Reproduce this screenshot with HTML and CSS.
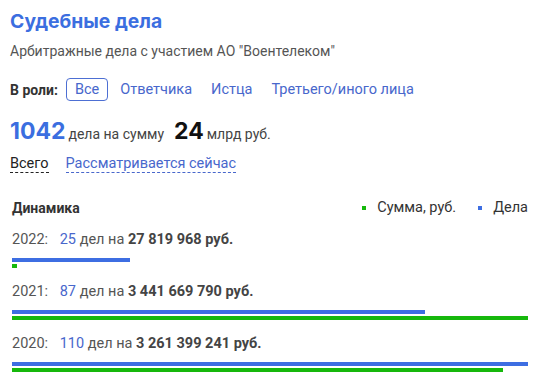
FILE: index.html
```html
<!DOCTYPE html>
<html>
<head>
    <title>Судебные дела</title>
    <link rel="stylesheet" href="styles.css">
</head>
<body>
    <div id="cases">
        <h2 class="title">Судебные дела</h2>
        <div class="subtitle">Арбитражные дела с участием АО "Воентелеком"</div>

        <div class="roles">
            <span class="roles-label">В роли:</span>
            <a class="role active">Все</a>
            <a class="role">Ответчика</a>
            <a class="role">Истца</a>
            <a class="role">Третьего/иного лица</a>
        </div>

        <div class="totals">
            <span class="count">1042</span>
            <span class="unit">дела на сумму</span>
            <span class="sum">24</span>
            <span class="unit">млрд руб.</span>
        </div>

        <div class="tabs">
            <a class="tab current">Всего</a>
            <a class="tab">Рассматривается сейчас</a>
        </div>

        <div class="chart">
            <div class="chart-head">
                <span class="chart-title">Динамика</span>
                <span class="legend"><i class="dot green"></i>Сумма, руб.</span>
                <span class="legend"><i class="dot blue"></i>Дела</span>
            </div>

            <div class="year">
                <div class="year-text">2022: <span class="num">25</span> дел на <b>27 819 968 руб.</b></div>
                <div class="bar blue" style="width: 22.8%"></div>
                <div class="bar green" style="width: 1%"></div>
            </div>
            <div class="year">
                <div class="year-text">2021: <span class="num">87</span> дел на <b>3 441 669 790 руб.</b></div>
                <div class="bar blue" style="width: 80%"></div>
                <div class="bar green" style="width: 100%"></div>
            </div>
            <div class="year">
                <div class="year-text">2020: <span class="num">110</span> дел на <b>3 261 399 241 руб.</b></div>
                <div class="bar blue" style="width: 100%"></div>
                <div class="bar green" style="width: 95.2%"></div>
            </div>
        </div>
    </div>
</body>
</html>
```

FILE: styles.css
```css
body {
    margin: 0;
    font-family: Roboto, "Noto Sans", sans-serif;
    background-color: #fff;
    color: #333;
}
#cases {
    padding: 8px 15px 0 10px;
}
.title {
    margin: 0;
    font-family: Inter, sans-serif;
    font-size: 19.3px;
    font-weight: 700;
    color: #3b6ee0;
    line-height: 26px;
}
.subtitle {
    margin-top: 8px;
    font-size: 14px;
    color: #555;
    line-height: 18px;
}
.roles {
    display: flex;
    align-items: center;
    margin-top: 18px;
    font-size: 14.5px;
}
.roles-label {
    font-weight: 700;
    font-size: 14px;
    color: #333;
    margin-right: 8px;
}
.role {
    color: #4867cc;
    margin-right: 19px;
    line-height: 21px;
}
.role.active {
    border: 1px solid #4d6fd3;
    border-radius: 4px;
    padding: 0 8px;
    margin-right: 12px;
}
.totals {
    display: flex;
    align-items: baseline;
    margin-top: 16px;
}
.count {
    font-family: Inter, sans-serif;
    font-size: 23px;
    font-weight: 700;
    color: #3b6ee0;
    margin-right: 3px;
}
.sum {
    font-family: Inter, sans-serif;
    font-size: 23px;
    font-weight: 700;
    color: #111;
    margin: 0 3px 0 10px;
}
.unit {
    font-size: 14px;
    color: #444;
}
.tabs {
    display: flex;
    margin-top: 10px;
    font-size: 14.5px;
}
.tab {
    color: #4867cc;
    border-bottom: 1px dashed #4867cc;
    margin-right: 17px;
    line-height: 17px;
}
.tab.current {
    color: #222;
    border-bottom-color: #222;
}
.chart {
    margin-top: 26px;
    padding-left: 2px;
}
.chart-head {
    display: flex;
    align-items: center;
    font-size: 14px;
}
.chart-title {
    font-weight: 700;
    color: #333;
    flex: 1;
}
.legend {
    display: flex;
    align-items: center;
    font-size: 14.5px;
    color: #333;
    margin-left: 22px;
}
.dot {
    width: 4px;
    height: 4px;
    margin-right: 11px;
}
.dot.green,
.bar.green {
    background-color: #16b80c;
}
.dot.blue,
.bar.blue {
    background-color: #3d6ee2;
}
.year {
    margin-top: 15px;
}
.year-text {
    font-size: 14.5px;
    color: #555;
    margin-bottom: 9px;
    line-height: 18px;
}
.year-text .num {
    color: #4867cc;
    margin-left: 8px;
}
.year-text b {
    color: #444;
}
.bar {
    height: 4px;
    margin-bottom: 2px;
}
```
